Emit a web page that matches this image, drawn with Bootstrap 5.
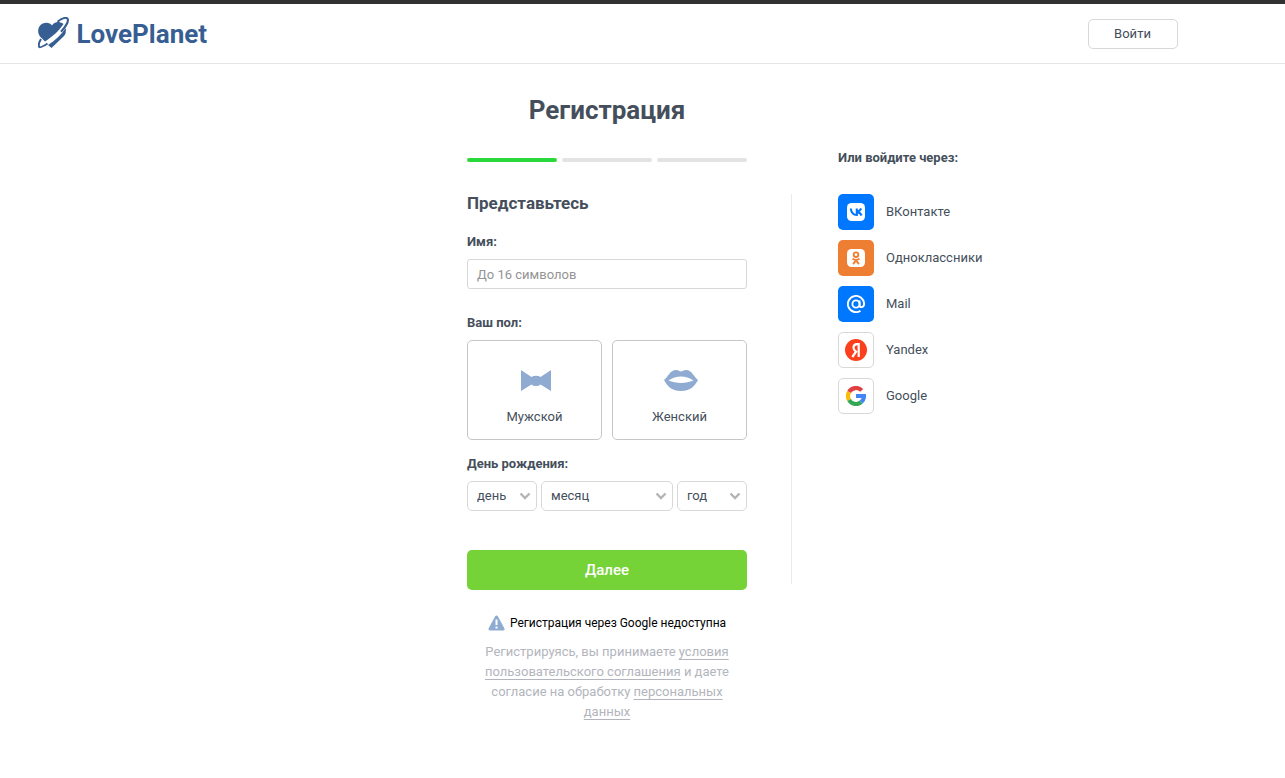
<!DOCTYPE html>
<html lang="ru">
<head>
<meta charset="utf-8">
<meta name="viewport" content="width=device-width, initial-scale=1">
<title>LovePlanet — Регистрация</title>
<link href="https://cdn.jsdelivr.net/npm/bootstrap@5.3.0/dist/css/bootstrap.min.css" rel="stylesheet">
<style>
:root { --ink: #454f5b; --line: #d8d8d8; --navy: #375e92; --soft: #8fabd1; }
body { font-family: Roboto, "Liberation Sans", sans-serif; font-size: 13px; line-height: 20px; color: var(--ink); }
.site-header { border-top: 4px solid #323232; border-bottom: 1px solid #e5e5e5; height: 64px; padding-right: 70px; }
.page-main { padding-right: 71px; }
.wrap { max-width: 1140px; }
.brand { color: var(--navy); gap: 8px; }
.brand:hover { color: var(--navy); }
.brand-name { font-size: 26px; line-height: 32px; font-weight: 700; }
.btn-login { width: 90px; height: 30px; padding: 0; font-size: 13px; color: var(--ink); border: 1px solid var(--line); border-radius: 5px; background: #fff; }
.page-title { font-size: 26px; line-height: 32px; font-weight: 700; margin: 30px 0 0; }
.steps { gap: 5px; margin-top: 32px; }
.steps span { height: 4px; border-radius: 2px; background: #e3e3e3; }
.steps .done { background: #28d83c; }
.form-title { font-size: 17px; line-height: 22px; font-weight: 700; margin: 30px 0 18px; }
.field-label { display: block; font-size: 13px; line-height: 20px; font-weight: 700; margin: 0 0 7px; padding: 0; float: none; }
.name-input { height: 30px; padding: 0 9px; font-size: 13px; border: 1px solid var(--line); border-radius: 3px; color: var(--ink); }
.name-input::placeholder { color: #949494; }
.sex-row { gap: 10px; margin-bottom: 14px; }
.sex-card { flex: 1; height: 100px; padding: 29px 0 0; border: 1px solid #c6c6c6; border-radius: 5px; cursor: pointer; }
.btn-check:checked + .sex-card { border-color: var(--soft); }
.sex-card svg { display: block; margin: 0 auto 16px; }
.date-row { display: grid; grid-template-columns: 70px 1fr 70px; gap: 4px; }
.date-select { height: 30px; padding: 0 20px 0 9px; font-size: 13px; line-height: 20px; color: var(--ink); border: 1px solid var(--line); border-radius: 5px;
  background-image: url("data:image/svg+xml,%3Csvg xmlns='http://www.w3.org/2000/svg' viewBox='0 0 12 8'%3E%3Cpath d='M1.500 1.500 6 6l4.500-4.500' fill='none' stroke='%23b4b4b4' stroke-width='2.400'/%3E%3C/svg%3E"); background-size: 12px 8px; background-position: right 5px center; }
.btn-next { height: 40px; margin-top: 39px; padding: 0; font-size: 15px; font-weight: 500; color: #fff; border: 0; border-radius: 5px; background: #76d337; }
.notice { margin: 23px 0 9px; gap: 5px; font-size: 12px; color: #000; }
.terms { margin: 0; padding: 0 15px; color: #b3b5bd; }
.terms a { color: inherit; text-decoration: underline; text-decoration-thickness: 1px; text-underline-offset: 3px; text-decoration-skip-ink: none; }
/* the form sits in the middle; the social sign-in takes the right column */
.signup { display: grid; grid-template-columns: 1fr 280px 1fr; }
.page-title, .form-col { grid-column: 2; }
.side-col { grid-column: 3; margin-left: 44px; padding-top: 22px; }
.side-title { font-size: 13px; line-height: 20px; font-weight: 700; margin: 0 0 26px; padding-left: 47px; }
.social-list { gap: 10px; min-height: 390px; margin: 0; padding-left: 46px; border-left: 1px solid #ebebeb; }
.social-list a { color: var(--ink); text-decoration: none; gap: 12px; }
.tile { width: 36px; height: 36px; border-radius: 5px; }
.tile-vk, .tile-mail { background: #07f; }
.tile-ok { background: #ee7f32; }
.tile-plain { border: 1px solid var(--line); }
</style>
</head>
<body>
<header class="site-header">
  <div class="wrap mx-auto h-100 d-flex align-items-center justify-content-between">
    <a href="#" class="brand d-flex align-items-center text-decoration-none">
      <svg width="31" height="34" viewBox="0 0 31 34" fill="currentColor" aria-hidden="true">
        <path d="M14 8.500C11.500 4.800 5 5 1.700 9-.8 13 0 17 2.500 20L7 24.500C14 20 21 14 25.500 7 21 3.500 16 5 14 8.500Z"/>
        <path d="M27.800 11C23 18 17 23.500 10 28L13.500 31 26 19Q28.500 16 27.800 11Z"/>
        <path d="M22 4.800C26 2.200 29 1.200 29.200 2.300 29.800 4.500 26 11 20 17 13 24 5 29.500 2 29.400.6 28.500 2.500 25 4.500 22.500" fill="none" stroke="#fff" stroke-width="1.600"/>
        <path d="M19.500 4.800C24 1.300 28 .3 29.500 1.500 31 4 27.500 10 23 14.800M9.500 26.500C5 29.500 2.200 31 1.300 30 0 28 1.200 25 3 22" fill="none" stroke="currentColor" stroke-width="2"/>
      </svg>
      <span class="brand-name">LovePlanet</span>
    </a>
    <button type="button" class="btn btn-login">Войти</button>
  </div>
</header>
<main class="page-main">
  <div class="wrap mx-auto signup">
    <h1 class="page-title text-center">Регистрация</h1>
    <form class="form-col">
      <div class="steps d-flex" aria-hidden="true"><span class="done flex-fill"></span><span class="flex-fill"></span><span class="flex-fill"></span></div>
      <h2 class="form-title">Представьтесь</h2>
      <label class="field-label" for="name">Имя:</label>
      <input id="name" type="text" maxlength="16" class="form-control name-input" placeholder="До 16 символов">
      <fieldset class="mt-4">
        <legend class="field-label">Ваш пол:</legend>
        <div class="sex-row d-flex">
          <input type="radio" class="btn-check" name="sex" id="male">
          <label class="sex-card text-center" for="male">
            <svg width="32" height="21" viewBox="-2 0 32 21" fill="#8fabd1" aria-hidden="true"><path d="M0 0 10.500 7Q12 5.800 15 5.800T19.500 7L30 0V21L19.500 14.500Q18 16 15 16T10.500 14.500L0 21Z"/></svg>
            Мужской
          </label>
          <input type="radio" class="btn-check" name="sex" id="female">
          <label class="sex-card text-center" for="female">
            <svg width="36" height="21" viewBox="-2 0 36 21" fill="#8fabd1" aria-hidden="true"><path fill-rule="evenodd" d="M0 10C4 7 6 0 12 0 14.500 0 15.500 1.500 17 1.500S19.500 0 22 0C28 0 30 7 34 10 30 17 26 21 17 21S4 17 0 10ZM4.500 10.500C12 13.800 22 13.800 29.500 10.500 22 5.300 12 5.300 4.500 10.500Z"/></svg>
            Женский
          </label>
        </div>
      </fieldset>
      <fieldset>
        <legend class="field-label">День рождения:</legend>
        <div class="date-row">
          <select class="form-select date-select" aria-label="День"><option>день</option></select>
          <select class="form-select date-select" aria-label="Месяц"><option>месяц</option></select>
          <select class="form-select date-select" aria-label="Год"><option>год</option></select>
        </div>
      </fieldset>
      <button type="submit" class="btn btn-next w-100">Далее</button>
      <div class="notice d-flex align-items-center justify-content-center">
        <svg width="17" height="16" viewBox="0 0 17 16" aria-hidden="true"><path d="M8.500 2 15 14H2Z" fill="#8fabd1" stroke="#8fabd1" stroke-width="3" stroke-linejoin="round"/><path d="M8.500 4.500V10M8.500 11.500v2" stroke="#fff" stroke-width="2"/></svg>
        <span>Регистрация через Google недоступна</span>
      </div>
      <p class="terms text-center">Регистрируясь, вы принимаете <a href="#">условия пользовательского соглашения</a> и даете согласие на обработку <a href="#">персональных данных</a></p>
    </form>
    <aside class="side-col">
      <h2 class="side-title">Или войдите через:</h2>
      <ul class="social-list list-unstyled d-flex flex-column">
        <li><a href="#" class="d-inline-flex align-items-center"><span class="tile tile-vk d-flex align-items-center justify-content-center">
          <svg width="18" height="18" viewBox="0 0 18 18" aria-hidden="true"><rect width="18" height="18" rx="4.500" fill="#fff"/><path d="M3.800 5.500Q4.500 11.800 9.800 12V5.500M14.200 5.500Q12.500 8.500 9.800 8.700 13 9 14.600 12.500" fill="none" stroke="#07f" stroke-width="2.100"/></svg></span>ВКонтакте</a></li>
        <li><a href="#" class="d-inline-flex align-items-center"><span class="tile tile-ok d-flex align-items-center justify-content-center">
          <svg width="18" height="18" viewBox="0 0 18 18" aria-hidden="true"><rect width="18" height="18" rx="4.500" fill="#fff"/><g fill="none" stroke="#ee7f32" stroke-width="1.900"><circle cx="9" cy="5.700" r="2.300"/><path d="M5.500 9.800Q9 12 12.500 9.800M6 15 9 11.700 12 15"/></g></svg></span>Одноклассники</a></li>
        <li><a href="#" class="d-inline-flex align-items-center"><span class="tile tile-mail d-flex align-items-center justify-content-center">
          <svg width="18" height="18" viewBox="0 0 20 20" fill="none" stroke="#fff" stroke-width="2.100" aria-hidden="true"><circle cx="10" cy="10" r="4"/><path d="M14 6V11Q14 13.500 16 13.500 19 13.300 19 10A9 9 0 1 0 15 17.500"/></svg></span>Mail</a></li>
        <li><a href="#" class="d-inline-flex align-items-center"><span class="tile tile-plain d-flex align-items-center justify-content-center">
          <svg width="22" height="22" viewBox="0 0 22 22" aria-hidden="true"><circle cx="11" cy="11" r="11" fill="#fc3f1d"/><path d="M13.700 18V5.100H12Q8.500 5.200 8.500 8.600 8.500 11 11 12.700L7.300 18" fill="none" stroke="#fff" stroke-width="2.200"/></svg></span>Yandex</a></li>
        <li><a href="#" class="d-inline-flex align-items-center"><span class="tile tile-plain d-flex align-items-center justify-content-center">
          <svg width="20" height="20" viewBox="0 0 20 20" aria-hidden="true"><g fill="none" stroke-width="4.200"><path d="M3.070 6A8 8 0 0 1 15.700 4.400" stroke="#e0403f"/><path d="M3.070 14A8 8 0 0 1 3.070 6" stroke="#fbbc05"/><path d="M15.100 16.150A8 8 0 0 1 3.070 14" stroke="#34a853"/><path d="M10 10H18A8 8 0 0 1 15.100 16.150" stroke="#4285f4"/></g></svg></span>Google</a></li>
      </ul>
    </aside>
  </div>
</main>
<script src="https://cdn.jsdelivr.net/npm/bootstrap@5.3.0/dist/js/bootstrap.bundle.min.js"></script>
</body>
</html>
